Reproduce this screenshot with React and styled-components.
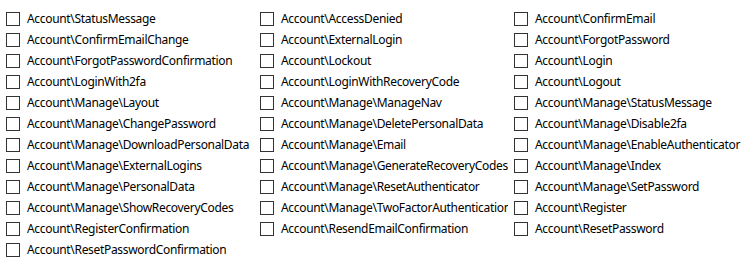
import React from "react";
import styled, { createGlobalStyle } from "styled-components";

const GlobalStyle = createGlobalStyle`
  body {
    margin: 0;
    background: #ffffff;
    font-family: "Segoe UI", "Noto Sans", "Open Sans", sans-serif;
  }
`;

const pages = [
  "Account\\StatusMessage",
  "Account\\AccessDenied",
  "Account\\ConfirmEmail",
  "Account\\ConfirmEmailChange",
  "Account\\ExternalLogin",
  "Account\\ForgotPassword",
  "Account\\ForgotPasswordConfirmation",
  "Account\\Lockout",
  "Account\\Login",
  "Account\\LoginWith2fa",
  "Account\\LoginWithRecoveryCode",
  "Account\\Logout",
  "Account\\Manage\\Layout",
  "Account\\Manage\\ManageNav",
  "Account\\Manage\\StatusMessage",
  "Account\\Manage\\ChangePassword",
  "Account\\Manage\\DeletePersonalData",
  "Account\\Manage\\Disable2fa",
  "Account\\Manage\\DownloadPersonalData",
  "Account\\Manage\\Email",
  "Account\\Manage\\EnableAuthenticator",
  "Account\\Manage\\ExternalLogins",
  "Account\\Manage\\GenerateRecoveryCodes",
  "Account\\Manage\\Index",
  "Account\\Manage\\PersonalData",
  "Account\\Manage\\ResetAuthenticator",
  "Account\\Manage\\SetPassword",
  "Account\\Manage\\ShowRecoveryCodes",
  "Account\\Manage\\TwoFactorAuthentication",
  "Account\\Register",
  "Account\\RegisterConfirmation",
  "Account\\ResendEmailConfirmation",
  "Account\\ResetPassword",
  "Account\\ResetPasswordConfirmation",
];

const List = styled.div`
  display: grid;
  grid-template-columns: repeat(3, 254px);
  grid-auto-rows: 21px;
  padding-top: 8px;
`;

const Item = styled.label`
  display: flex;
  align-items: center;
  gap: 7px;
  padding-left: 6px;
  overflow: hidden;
  white-space: nowrap;
  font-size: 12px;
  letter-spacing: -0.32px;
  color: #000000;
  cursor: default;
`;

const Box = styled.span`
  flex: none;
  width: 12px;
  height: 12px;
  border: 1px solid #333333;
  background: #ffffff;
`;

export default function App() {
  return (
    <>
      <GlobalStyle />
      <List>
        {pages.map((p) => (
          <Item key={p}>
            <Box />
            {p}
          </Item>
        ))}
      </List>
    </>
  );
}
